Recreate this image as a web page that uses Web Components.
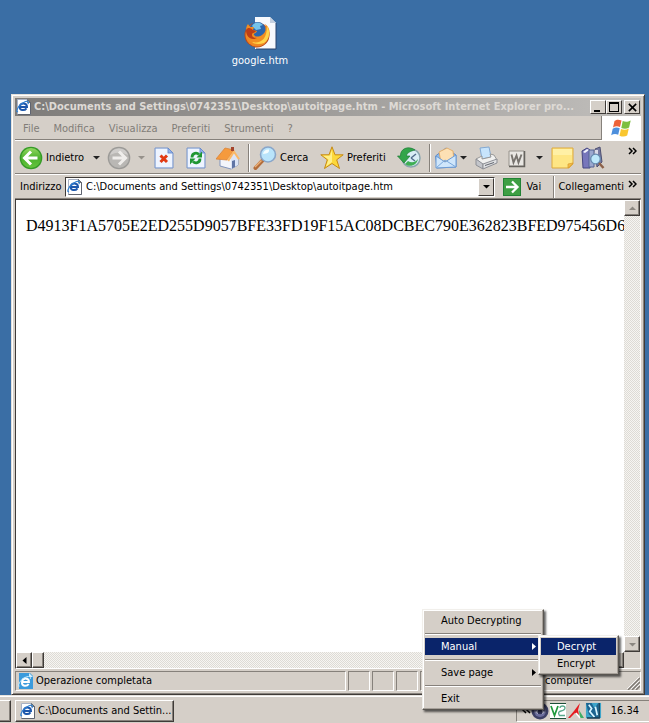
<!DOCTYPE html>
<html lang="it">
<head>
<meta charset="utf-8">
<title>Desktop</title>
<style>
html,body{margin:0;height:100%}
body{--face:#d5cfc8;--light:#fff;--shade:#86817b;--dark:#3f3b38;--navy:#0a246a;--blue:#3a6ea5;
font:11px/14px "DejaVu Sans Condensed","Noto Sans",sans-serif;color:#000}
</style>
</head>
<body>
<desk-page></desk-page>
<script>
const BASE = `*{box-sizing:border-box}button{font:inherit;color:inherit;border:0;background:none;padding:0;margin:0;text-align:left;white-space:nowrap}`;
const define = (tag, css, html, setup) => customElements.define(tag, class extends HTMLElement {
  connectedCallback() {
    if (this.shadowRoot) return;
    const root = this.attachShadow({ mode: 'open' });
    root.innerHTML = `<style>${BASE}${css}</style>${typeof html === 'function' ? html(this) : html}`;
    if (setup) setup(this, root);
  }
});

const E = '<path d="M3.500 8h7.500c0-4.500-6.500-4.800-7.300-.5s4.800 4.500 6.800 1.800" fill="none" stroke="#1d57ac" stroke-width="2"/><path d="M2 12.500C-.5 14 1 8 6 4.500S13.500 1.500 12 5" fill="none" stroke="#2f7fd0" stroke-width="1.200"/>';
const PAGE = (f = '#fff') => `<path d="M1.500.5h10l3 3v12h-13z" fill="${f}" stroke="#a9b2c4"/><path d="M14.500 3.500v12h-13" fill="none" stroke="#5f6470"/><path d="M11.500.5v3h3z" fill="#d9c99a" stroke="#4f525c" stroke-width=".8"/>`;
const SHEET = '<path d="M3 2h13l5 5v15H3z" fill="#d8e6fc" stroke="#7793c8"/><path d="M4 3h11v5h5v13H4z" fill="#eef4ff"/><path d="M16 2v5h5z" fill="#8fb0ec" stroke="#6485c4" stroke-width=".7"/>';
const ICONS = {
  ie: [16, PAGE() + E],
  ieblue: [16, '<path d="M2 0h11l3 3v13H2z" fill="#3b9bdc"/><path d="M12 0v4h4z" fill="#d5efff"/><g transform="translate(1 1)"><path d="M4 8h7c0-4.500-6.500-4.800-7 0s5 4.500 6.700 2" fill="none" stroke="#fff" stroke-width="1.900"/><path d="M1.500 12C-1 14 1 7 6 4s8-1 6 1" fill="none" stroke="#c4ecff"/></g>'],
  back: [24, '<circle cx="12" cy="12" r="11.300" fill="#349a26"/><circle cx="12" cy="12" r="10" fill="url(#bg)"/><defs><linearGradient id="bg" x2="0" y2="1"><stop stop-color="#92d860"/><stop offset=".5" stop-color="#4bb12c"/><stop offset="1" stop-color="#66c43e"/></linearGradient></defs><path d="M12 5.500L5.500 12l6.500 6.500M6 12h12.500" fill="none" stroke="#fff" stroke-width="3"/>'],
  fwd: [24, '<circle cx="12" cy="12" r="11.300" fill="#9b9a97"/><circle cx="12" cy="12" r="10" fill="#b9b7b4"/><path d="M3 9a9.500 9.500 0 0 1 18 0Q12 4 3 9" fill="#cfcdcb"/><path d="M12 5.500l6.500 6.500-6.500 6.500M18 12H5.500" fill="none" stroke="#efedeb" stroke-width="3"/>'],
  stop: [24, SHEET + '<path d="M8.500 9.500l6.500 6.500M15 9.500L8.500 16" stroke="#e23a14" stroke-width="3"/>'],
  refresh: [24, SHEET + '<path d="M8 11.500c0-5 5-5 7-3M16 12.500c0 5-5 5-7 3" fill="none" stroke="#1f9632" stroke-width="2.800"/><path d="M12.500 11.500H18V5.500zM11.500 12.500H6v6z" fill="#1f9632"/>'],
  home: [24, '<path d="M4 12v8l11 3 7-4v-8l-6-6z" fill="#f3f5fb" stroke="#8295bd"/><path d="M15 23l7-4v-8l-4-4-3 5z" fill="#dbe4f6"/><path d="M0 13L9 2l9 2-7 10z" fill="#f59a3d" stroke="#d9843a" stroke-width=".8"/><path d="M11 14l7-10 6 9-2 .5-4-6-5 8z" fill="#fbb867"/><path d="M15 1h3v4h-3z" fill="#a4442c"/><path d="M16 15l3-1v7l-3 1.500z" fill="#5f74a5"/>'],
  search: [24, '<path d="M9.500 14.500L2.500 22" stroke="#b36d3b" stroke-width="4" stroke-linecap="round"/><path d="M8.500 14.500L2 21" stroke="#eab078" stroke-width="1.500"/><circle cx="15" cy="8.500" r="7.500" fill="#b9e4fb" stroke="#89a6c9" stroke-width="1.600"/><path d="M10 8a5 5 0 0 1 6-4.500q1 4-6 4.500" fill="#f4fdff"/>'],
  star: [24, '<path d="M12 .8l3 8h8.200l-6.500 5 2.800 8.700L12 17.500l-7.500 5 2.800-8.700-6.500-5H9z" fill="#fcd83b" stroke="#c68a16"/><path d="M12 4v12l-6 4.500 2.500-7L3 9.800h7z" fill="#fff08a"/>'],
  history: [24, '<circle cx="14" cy="12" r="9" fill="#d9eef5" stroke="#8aa6ae" stroke-width="1.500"/><path d="M14 12l5-4M14 12l4 3" stroke="#536f8d" stroke-width="1.500"/><path d="M18 4C11-1 3 3 3.500 10H.5L7 17l6-7H9.500c0-3 4-5 8.500-6z" fill="#32a54a" stroke="#1c7b33" stroke-width=".7"/><path d="M8 18c5 4 12 1 13-5-3 4-7 4-10 2z" fill="#3fae54"/>'],
  mail: [24, '<path d="M1.500 10L12 2l10 7v12l-19 1z" fill="#8db9ec" stroke="#5f8bc6"/><path d="M5 6l8-4 6 3 1 10-13 1z" fill="#fce0b4" stroke="#e3a557" stroke-width=".8"/><path d="M2 10l9 6 11-7v12L2 22z" fill="#cfe6fb" stroke="#6c9bd4"/><path d="M2 22l9-8 11 7" fill="none" stroke="#79a7db"/>'],
  print: [24, '<path d="M6 2l9-1 2 10-9 2z" fill="#c7e4fc" stroke="#83a9d2"/><path d="M2 13l6-3v3l9-2-1-3 4 1 3 5-14 5z" fill="#f1f1f0" stroke="#999"/><path d="M2 13l7 5v5l-7-4z" fill="#c3c5ca" stroke="#8d8f95"/><path d="M9 18l14-5v4L9 23z" fill="#dfe0e2" stroke="#8d8f95"/><path d="M11 19.500l9-3" stroke="#62666f"/>'],
  word: [24, '<path d="M4 5h15v15H4z" fill="#e9e7e3" stroke="#96928c"/><path d="M19.500 5v15.500H4" fill="none" stroke="#66635e" stroke-width="1.500"/><path d="M6.500 8.500l2 8 3-7 2 7 3-8" fill="none" stroke="#77736e" stroke-width="1.900"/>'],
  note: [24, '<path d="M2 2h21v16l-4 4H2z" fill="#fee684" stroke="#dda93d"/><path d="M3 3h19v6H3z" fill="#fff0a5"/><path d="M23 17l-5 5 0-4z" fill="#f8bd45" stroke="#d59a2f" stroke-width=".7"/>'],
  research: [24, '<path d="M1 5l5-3 3 2v18H2z" fill="#7776bb" stroke="#454681"/><path d="M2 6l4-3 2 1-4 3z" fill="#f3f4fd"/><path d="M8 4h5v17H8z" fill="#9ba8cf" stroke="#556292"/><path d="M14 3l5-2 2 15-5 5z" fill="#777aa2" stroke="#4e5071"/><path d="M14 4h3v10h-3z" fill="#d9dae8"/><circle cx="14.500" cy="13" r="4.800" fill="#bde8fb" stroke="#668aaf" stroke-width="1.300"/><path d="M18 17l4.500 5" stroke="#8d624a" stroke-width="2.500"/>'],
  go: [18, '<path d="M0 0h18v18H0z" fill="#218335"/><path d="M1 1h16v16H1z" fill="#3e9f43"/><path d="M9 3.500L14.500 9 9 14.500M14 9H3" fill="none" stroke="#fff" stroke-width="2.300"/>'],
  flag: [24, '<path d="M4.500 5C7 3 9 3.500 11.500 4.500L10 11C7.500 10 5.500 10 3 11.500z" fill="#ec6237"/><path d="M12.700 5c3 1.300 5 1 8-.5l-1.600 7c-2.600 1.500-5 1.600-7.800.4z" fill="#7ebf3e"/><path d="M2.700 12.700c2.600-1.600 4.600-1.500 7-.5L8.200 18.700c-2.500-1-4.500-1-7 .5z" fill="#4d8fdc"/><path d="M11 13c3 1.200 5 1 7.800-.5L17.200 19.500c-2.600 1.500-5 1.300-7.700.2z" fill="#f9c62f"/>'],
  firefox: [34, '<path d="M12 1h15l6 6v26H12z" fill="#f7f9fd"/><path d="M33 7v26H13" fill="none" stroke="#27436e"/><path d="M27 1v6h6z" fill="#c4cfdf"/><circle cx="14" cy="19" r="12.500" fill="#b8481b"/><circle cx="14" cy="19" r="11.500" fill="#ee8623"/><circle cx="14.500" cy="14.500" r="8.500" fill="#2c65ad"/><path d="M9 10c3-5 8-4 11-1l-3 1 1 3-5 1z" fill="#75c3ea"/><path d="M3 14C3 10 5 8 5 8l2 3 4 0-1 3 4 1c-1 3-4 2-3 4s5 2 8 0 5-6 3-11c5 3 6 10 3 15-5 8-18 7-21-2-1-3-1-6-1-7z" fill="#f18d22"/><path d="M24 10c4 6 2 14-3 17-5 2-10 1-12-1 8 2 15-2 15-16z" fill="#ffd34a"/><path d="M3 14c2-3 5-2 7 0l3 1c-2 3-4 1-4 4 0 2 2 3 5 3-6 3-11-1-11-8z" fill="#bd3e16"/>'],
  orb: [18, '<circle cx="9" cy="9" r="8.500" fill="#3d4066"/><circle cx="9" cy="9" r="6" fill="#6a6c9d"/><path d="M4 10q5-5 10 0-5 5-10 0" fill="#c0c2dc"/><circle cx="9" cy="10" r="2.500" fill="#2e3157"/>'],
  v2: [18, '<path d="M1 1h16v16H1z" fill="#fff"/><path d="M1 1.500h16M1 16.500h16" stroke="#1c4f38"/><path d="M2 4l3.500 9.500L9 4" fill="none" stroke="#1f9a3c" stroke-width="1.700"/><path d="M11 6q0-2 2.500-2T16 6t-4 3-1.500 4.500H16" fill="none" stroke="#5aa88c" stroke-width="1.300"/>'],
  red: [18, '<path d="M1 16L7 9l6-8-2 7 1 5-4-2-5 5z" fill="#e51c20"/><path d="M12 8l5 8h-4z" fill="#3eae66"/><path d="M9 11l4 5" stroke="#fff" stroke-width="1.500"/>'],
  blue: [18, '<path d="M1 1h16v16H1z" fill="#3da4c9"/><path d="M1 1h6l3 6 4-6v16H9L4 13z" fill="#1c6490"/><path d="M4 3l3 4-2 3 5 6M11 5l2 9" stroke="#d7f5ff" stroke-width="1.800" fill="none"/><path d="M15 1v16H2" stroke="#153a52" stroke-width="1.500" fill="none"/>'],
  down: [7, '<path d="M0 2h7L3.500 5.500z" fill="currentColor"/>'],
  up: [7, '<path d="M0 5h7L3.500 1.500z" fill="currentColor"/>'],
  left: [7, '<path d="M5.500 0v7L1.500 3.500z" fill="currentColor"/>'],
  right: [7, '<path d="M2 0v7l4-3.500z" fill="currentColor"/>'],
  more: [9, '<path d="M1 1l3 3-3 3M5 1l3 3-3 3" stroke="currentColor" stroke-width="1.500" fill="none"/>'],
  less: [9, '<path d="M4 1L1 4l3 3M8 1L5 4l3 3" stroke="currentColor" stroke-width="1.500" fill="none"/>'],
  min: [12, '<path d="M2 9h6v2H2z"/>'],
  max: [12, '<path d="M1 1h10v10H1zM2 3v7h8V3z" fill-rule="evenodd"/>'],
  close: [12, '<path d="M2 2l8 8M10 2l-8 8" stroke="#000" stroke-width="1.700"/>'],
  grip: [14, '<path d="M2 14L14 2M6 14l8-8M10 14l4-4" stroke="#7f7a74" stroke-width="1.500"/><path d="M1 13L13 1M5 13l8-8M9 13l5-5" stroke="#fff" stroke-width=".8"/>']
};
define('ui-icon', ':host{display:inline-flex;flex:none}svg{display:block}', h => {
  const [s, body] = ICONS[h.getAttribute('name')];
  const n = h.getAttribute('size') || s;
  return `<svg width="${n}" height="${n}" viewBox="0 0 ${s} ${s}" aria-hidden="true">${body}</svg>`;
});

define('desk-icon', `:host{display:block;width:76px;color:#fff}button{width:100%;display:flex;flex-direction:column;align-items:center;gap:4px}`,
  `<button><ui-icon name="firefox"></ui-icon><slot></slot></button>`);

define('title-bar', `:host{display:flex;align-items:center;height:18px;padding:0 1px;background:linear-gradient(90deg,#7d7b79,#c1bfbc);color:#dedad5}
span{flex:1;min-width:0;overflow:hidden;white-space:nowrap;margin:0 6px 0 2px;font:bold 11px/16px "DejaVu Sans Condensed",sans-serif}
div{display:flex}button{width:16px;height:14px;background:var(--face);border:1px solid;border-color:#fff #3f3b38 #3f3b38 #fff;display:flex;align-items:center;justify-content:center}button:last-child{margin-left:2px}`,
  `<ui-icon name="ie"></ui-icon><span><slot></slot></span><div><button aria-label="Riduci"><ui-icon name="min"></ui-icon></button><button aria-label="Ingrandisci"><ui-icon name="max"></ui-icon></button><button aria-label="Chiudi"><ui-icon name="close" size="11"></ui-icon></button></div>`);

define('menu-bar', `:host{display:flex;height:25px;border-bottom:1px solid #fff;color:#817d78}
nav{flex:1;display:flex;align-items:center;gap:14px;padding:2px 0 0 8px;border-bottom:1px solid var(--shade)}div{width:40px;background:#fff;border-left:1px solid var(--shade);display:flex;align-items:center;justify-content:center}`,
  `<nav><button>File</button><button>Modifica</button><button>Visualizza</button><button>Preferiti</button><button>Strumenti</button><button>?</button></nav><div><ui-icon name="flag"></ui-icon></div>`);

define('tool-button', `:host{display:flex;align-items:center}button{display:flex;align-items:center;gap:3px}.a{margin-left:auto;margin-right:7px;color:#222}:host([dim]) .a{color:#96918b}`,
  h => `<button aria-label="${h.title || h.textContent}"><ui-icon name="${h.getAttribute('icon')}"></ui-icon><slot></slot></button>${h.hasAttribute('menu') ? '<ui-icon class="a" name="down"></ui-icon>' : ''}`);

define('tool-bar', `:host{display:grid;grid-template-columns:88px 45px 32px 32px 28px 9px 67px 77px 28px 9px 40px 31px 45px 31px 1fr auto;align-items:center;height:33px;padding:1px 4px 0;border-bottom:1px solid var(--shade)}
i{height:28px;width:2px;border-left:1px solid var(--shade);border-right:1px solid #fff;justify-self:center}.m{align-self:start;padding-top:4px}`,
  `<tool-button icon="back" menu>Indietro</tool-button><tool-button icon="fwd" menu dim title="Avanti"></tool-button><tool-button icon="stop" title="Termina"></tool-button><tool-button icon="refresh" title="Aggiorna"></tool-button><tool-button icon="home" title="Pagina iniziale"></tool-button><i></i><tool-button icon="search">Cerca</tool-button><tool-button icon="star">Preferiti</tool-button><tool-button icon="history" title="Cronologia"></tool-button><i></i><tool-button icon="mail" menu title="Posta"></tool-button><tool-button icon="print" title="Stampa"></tool-button><tool-button icon="word" menu title="Modifica"></tool-button><tool-button icon="note" title="Discussione"></tool-button><tool-button icon="research" title="Ricerche"></tool-button><button class="m" aria-label="Altro"><ui-icon name="more"></ui-icon></button>`);

define('address-bar', `:host{display:flex;align-items:center;height:25px;padding:0 4px 0 5px;border-top:1px solid #fff;border-bottom:1px solid var(--shade)}
label{width:45px}.f{flex:1;min-width:0;height:20px;display:flex;align-items:center;background:#fff;border:1px solid;border-color:var(--dark) #fff #fff var(--dark);padding-left:1px}
input{flex:1;min-width:0;font:inherit;color:inherit;border:0;padding:0 0 0 3px;background:none;outline:0}.d{width:16px;height:18px;background:var(--face);border:1px solid;border-color:#fff var(--dark) var(--dark) #fff;display:flex;align-items:center;justify-content:center}
.g{display:flex;align-items:center;gap:5px;width:50px;margin-left:8px}i{height:22px;border-left:1px solid var(--shade);border-right:1px solid #fff;margin-right:3px}.m{margin-left:4px;align-self:start;padding-top:4px}`,
  `<label for="a">Indirizzo</label><div class="f"><ui-icon name="ie"></ui-icon><input id="a" value="C:\\Documents and Settings\\0742351\\Desktop\\autoitpage.htm"><button class="d" aria-label="Apri elenco"><ui-icon name="down"></ui-icon></button></div><button class="g"><ui-icon name="go"></ui-icon>Vai</button><i></i><button>Collegamenti</button><button class="m" aria-label="Altri collegamenti"><ui-icon name="more"></ui-icon></button>`);

define('scroll-bar', `:host{display:flex;background:repeating-conic-gradient(#f6f5f2 0 25%,#dedbd5 0 50%) 0 0/2px 2px}:host([vertical]){flex-direction:column;justify-content:space-between;width:16px}:host(:not([vertical])){height:16px}
button{width:16px;height:16px;flex:none;background:var(--face);border:1px solid;border-color:#fff var(--dark) var(--dark) #fff;box-shadow:inset -1px -1px var(--shade);display:flex;align-items:center;justify-content:center}:host([vertical]) button{color:#8b8781}.t{width:12px;margin-right:auto}`,
  h => h.hasAttribute('vertical') ? `<button aria-label="Su"><ui-icon name="up"></ui-icon></button><button aria-label="Giù"><ui-icon name="down"></ui-icon></button>`
    : `<button aria-label="Sinistra"><ui-icon name="left"></ui-icon></button><button class="t" aria-label="Scorri"></button><button aria-label="Destra"><ui-icon name="right"></ui-icon></button>`);

define('page-view', `:host{flex:1;min-height:0;display:grid;grid-template:minmax(0,1fr) 16px/minmax(0,1fr) 16px;border:1px solid;border-color:var(--dark) #fff #fff var(--dark);background:var(--face)}
main{background:#fff;overflow:hidden;padding:16px 10px;white-space:nowrap;font:16px/20px "Liberation Serif",serif}`,
  `<main><slot></slot></main><scroll-bar vertical></scroll-bar><scroll-bar></scroll-bar>`);

define('status-bar', `:host{display:grid;grid-template-columns:1fr 22px 22px 22px 22px 75px 120px;gap:2px;height:22px;padding-top:2px}
div{border:1px solid;border-color:var(--shade) #fff #fff var(--shade);display:flex;align-items:center;gap:3px;padding-left:1px;white-space:nowrap}
.z{justify-content:flex-start;padding-left:23px}.z ui-icon{margin-left:auto;align-self:end}`,
  `<div><ui-icon name="ieblue"></ui-icon>Operazione completata</div><div></div><div></div><div></div><div></div><div></div><div class="z">computer<ui-icon name="grip"></ui-icon></div>`);

define('browser-window', `:host{display:flex;flex-direction:column;background:var(--face);padding:3px;border:1px solid;border-color:#e4e1dc var(--dark) var(--dark) #e4e1dc;box-shadow:inset 1px 1px #fff,inset -1px -1px var(--shade)}`,
  `<title-bar>C:\\Documents and Settings\\0742351\\Desktop\\autoitpage.htm - Microsoft Internet Explorer pro...</title-bar><menu-bar></menu-bar><tool-bar></tool-bar><address-bar></address-bar><page-view><slot></slot></page-view><status-bar></status-bar>`);

define('task-bar', `:host{display:flex;align-items:center;gap:4px;height:28px;background:var(--face);border-top:1px solid #e6e3de;box-shadow:inset 0 1px #fff;padding-top:2px}
button{height:22px;border:1px solid;border-color:#fff var(--dark) var(--dark) #fff;box-shadow:inset -1px -1px var(--shade)}.p{width:11px;border-left:0}
.b{width:159px;display:flex;align-items:center;gap:2px;padding-left:4px}
div{margin-left:auto;width:133px;height:22px;border:1px solid;border-color:var(--shade) #fff #fff var(--shade);border-right:0;display:flex;align-items:center;padding:0 10px 0 5px}time{margin-left:auto}`,
  `<button class="p" aria-label="Finestra"></button><button class="b"><ui-icon name="ie"></ui-icon>C:\\Documents and Settin...</button><div><ui-icon name="less"></ui-icon><ui-icon name="orb"></ui-icon><ui-icon name="v2"></ui-icon><ui-icon name="red"></ui-icon><ui-icon name="blue" size="17"></ui-icon><time>16.34</time></div>`);

define('pop-menu', `:host{display:block;background:var(--face);padding:2px;border:1px solid;border-color:#f1efeb #5a5651 #5a5651 #f1efeb;box-shadow:inset -1px -1px #a7a19a,inset 1px 1px #fff,2px 2px 2px #0009}`, `<div role="menu"><slot></slot></div>`);
define('menu-item', `:host{display:block;position:relative}button{display:flex;align-items:center;justify-content:space-between;width:100%;height:17px;padding:0 4px 0 16px}:host([active]) button{background:var(--navy);color:#fff}`,
  h => `<button role="menuitem"><span><slot></slot></span>${h.hasAttribute('sub') ? '<ui-icon name="right"></ui-icon>' : ''}</button><slot name="sub"></slot>`);
define('menu-rule', `:host{display:block;padding:4px 0 3px}div{height:2px;background:var(--shade);border-bottom:1px solid #fff}`, '<div></div>');

define('desk-page', `:host{display:flex;flex-direction:column;min-height:100vh;background:var(--blue);position:relative;overflow:hidden;padding-top:94px;box-sizing:border-box}
desk-icon{position:absolute;left:222px;top:16px}browser-window{flex:1;margin:0 4px 0 11px}
.root{position:absolute;right:105px;bottom:13px;width:122px}.sub{position:absolute;left:113px;top:-3px;width:81px}`,
  `<desk-icon>google.htm</desk-icon>
<browser-window>D4913F1A5705E2ED255D9057BFE33FD19F15AC08DCBEC790E362823BFED975456D60A</browser-window>
<task-bar></task-bar>
<pop-menu class="root"><menu-item>Auto Decrypting</menu-item><menu-rule></menu-rule><menu-item active sub>Manual<pop-menu class="sub" slot="sub"><menu-item active>Decrypt</menu-item><menu-item>Encrypt</menu-item></pop-menu></menu-item><menu-rule></menu-rule><menu-item sub>Save page</menu-item><menu-rule></menu-rule><menu-item>Exit</menu-item></pop-menu>`);
</script>
</body>
</html>
